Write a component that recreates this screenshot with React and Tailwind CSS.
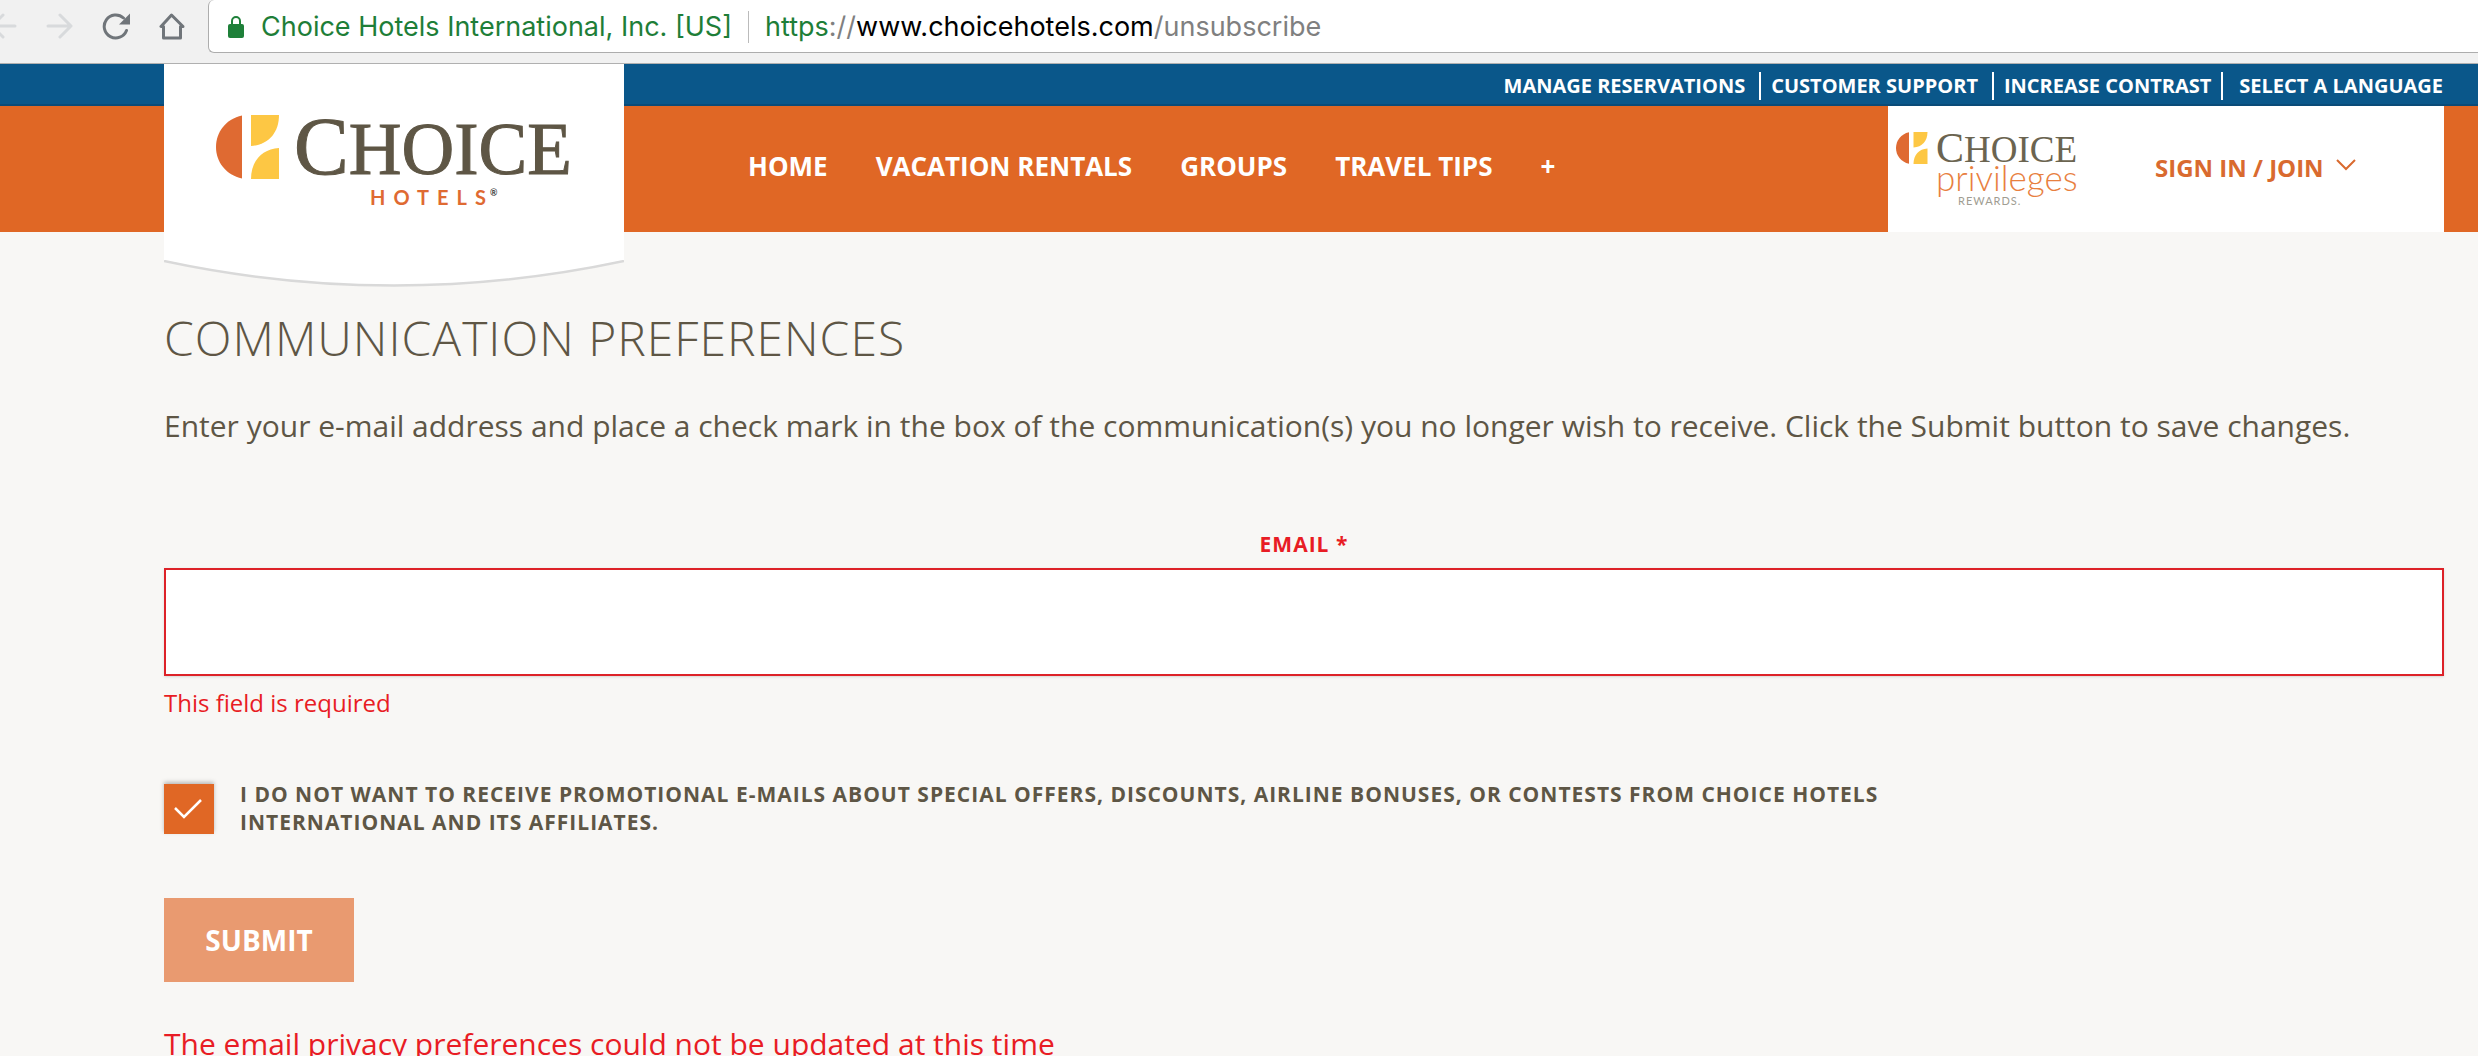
import React from "react";

function ChoiceMark({ className }) {
  return (
    <svg viewBox="0 0 64 64" className={className} aria-hidden="true">
      <path d="M26 0.500C10 4 0 17 0 32s10 28 26 31.500z" fill="#df6a32" />
      <path d="M35 0h28c0 18-11 30-28 31z" fill="#fdc744" />
      <path d="M63 33v31H35C35 46 46 34 63 33z" fill="#fdc744" />
    </svg>
  );
}

function ChoiceWord({ className, big, small }) {
  return (
    <span className={className}>
      <span className={big}>C</span>
      <span className={small}>HOICE</span>
    </span>
  );
}

function BrowserBar() {
  return (
    <div className="flex h-16 items-start border-b border-[#b0b0b0] bg-[#f1f1f1] font-['Inter',sans-serif]">
      <div className="flex h-[53px] w-[208px] shrink-0 items-center gap-7 text-[#70757a]">
        <button aria-label="Back" className="-ml-[10px] text-[#d8dadc]">
          <svg viewBox="0 0 28 28" className="size-7" fill="none" stroke="currentColor" strokeWidth="3" strokeLinecap="round" strokeLinejoin="round"><path d="M25 13H2M13 2L2 13l11 11" /></svg>
        </button>
        <button aria-label="Forward" className="text-[#d8dadc]">
          <svg viewBox="0 0 28 28" className="size-7" fill="none" stroke="currentColor" strokeWidth="3" strokeLinecap="round" strokeLinejoin="round"><path d="M2 13h23M14 2l11 11-11 11" /></svg>
        </button>
        <button aria-label="Reload">
          <svg viewBox="0 0 28 28" className="size-7" fill="none" stroke="currentColor" strokeWidth="3" strokeLinecap="round"><path d="M24.500 17.500A11.500 11.500 0 1 1 21.500 5" /><path d="M28 0.500v11H17z" fill="currentColor" stroke="none" /></svg>
        </button>
        <button aria-label="Home">
          <svg viewBox="0 0 28 28" className="size-7" fill="none" stroke="currentColor" strokeWidth="3" strokeLinejoin="round"><path d="M13.500 2L3 13.500h2.500V25h17V13.500H25z" /></svg>
        </button>
      </div>
      <div className="flex h-[53px] grow items-center rounded-l-md border-b border-l border-[#adadad] bg-white pl-[18px] pt-[2px] text-[27px] text-[#1e7e38]">
        <svg viewBox="0 0 18 24" className="mr-4 h-6 w-[18px]" aria-hidden="true"><rect x="1" y="9" width="16" height="14" rx="2" fill="#1e8039" /><path d="M5 10V6a4 4 0 0 1 8 0v4" fill="none" stroke="#1e8039" strokeWidth="2" /></svg>
        <span>Choice Hotels International, Inc. [US]</span>
        <span className="mx-4 h-8 w-px bg-[#bbb]" />
        <span>https<span className="text-[#808080]">://</span><span className="text-black">www.choicehotels.com</span><span className="text-[#808080]">/unsubscribe</span></span>
      </div>
    </div>
  );
}

function LogoCard() {
  return (
    <a href="#home" aria-label="Choice Hotels" className="absolute left-[164px] top-0 flex w-[460px] flex-col">
      <span className="flex h-[196px] items-start bg-white pl-[52px] pt-[51px]">
        <ChoiceMark className="size-16" />
        <span className="ml-[14px] flex flex-col">
          <ChoiceWord className="font-['Liberation_Serif',serif] leading-[64px] text-[#5e5645] [-webkit-text-stroke:1px_#5e5645]" big="text-[82px]" small="text-[73px]" />
          <span className="-mt-[22px] flex pl-[76px] font-['Lato',sans-serif] text-[20px] font-bold leading-[36px] tracking-[8px] text-[#df6a32]">HOTELS<span className="-ml-1 text-[9px] leading-[28px] tracking-normal text-[#444]">®</span></span>
        </span>
      </span>
      <svg viewBox="0 0 460 28" className="block w-full" aria-hidden="true"><path d="M0 0Q230 50 460 0z" fill="#fff" /><path d="M0 1Q230 50 460 1" fill="none" stroke="#d9d9d9" strokeWidth="2.500" /></svg>
    </a>
  );
}

const utility = [
  { text: "MANAGE RESERVATIONS", pad: "pr-[14px]" },
  { text: "CUSTOMER SUPPORT", pad: "border-l-2 border-white pl-[10px] pr-[14px]" },
  { text: "INCREASE CONTRAST", pad: "border-l-2 border-white pl-[10px] pr-[10px]" },
  { text: "SELECT A LANGUAGE", pad: "border-l-2 border-white pl-4" },
];
const nav = ["HOME", "VACATION RENTALS", "GROUPS", "TRAVEL TIPS", "+"];

function Header() {
  return (
    <header className="relative">
      <div className="flex h-[42px] items-center justify-end border-b-2 border-[#0a4b78] bg-[#0a578a] pr-[35px] pt-1 text-[20px] font-bold leading-[28px] text-white">
        {utility.map((item) => (
          <a key={item.text} href="#utility" className={item.pad}>{item.text}</a>
        ))}
      </div>
      <div className="flex h-[126px] items-stretch justify-between bg-[#e06725] pl-[748px] pr-[34px]">
        <nav className="flex items-center gap-12 pb-[6px] text-[26px] font-bold text-white">
          {nav.map((t) => (
            <a key={t} href="#nav">{t}</a>
          ))}
        </nav>
        <div className="flex w-[556px] items-start bg-white pl-2 pt-[26px]">
          <a href="#privileges" aria-label="Choice Privileges Rewards" className="flex w-[184px] items-start">
            <ChoiceMark className="size-8" />
            <span className="ml-2 flex flex-col">
              <ChoiceWord className="font-['Liberation_Serif',serif] leading-[32px] text-[#6b6450]" big="text-[42px]" small="text-[37px]" />
              <span className="-mt-[14px] font-['Lato',sans-serif] text-[35px] font-light leading-[36px] text-[#e8803f]">privileges</span>
              <span className="pl-[22px] font-['Lato',sans-serif] text-[11px] leading-[12px] tracking-[1px] text-[#a09d92]">REWARDS.</span>
            </span>
          </a>
          <button className="ml-[75px] flex items-center gap-3 pt-[18px] text-[24px] font-bold leading-[36px] text-[#d96a2f]">
            SIGN IN / JOIN
            <svg viewBox="0 0 20 12" className="mb-[6px] h-3 w-5" fill="none" stroke="currentColor" strokeWidth="2" aria-hidden="true"><path d="M1 1l9 9 9-9" /></svg>
          </button>
        </div>
      </div>
      <LogoCard />
    </header>
  );
}

export default function App() {
  return (
    <div className="h-screen overflow-hidden bg-[#f8f7f5] font-['Open_Sans',sans-serif] text-[#5e5645]">
      <BrowserBar />
      <Header />
      <main className="pl-[164px] pr-[34px] pt-[72px]">
        <h1 className="text-[48px] font-light leading-[68px] tracking-[1px]">COMMUNICATION PREFERENCES</h1>
        <p className="mt-8 text-[30px] leading-[44px]">Enter your e-mail address and place a check mark in the box of the communication(s) you no longer wish to receive. Click the Submit button to save changes.</p>
        <form className="mt-[82px]">
          <label htmlFor="email" className="block text-center text-[21px] font-bold leading-[28px] tracking-[1px] text-[#e81c24]">EMAIL *</label>
          <input id="email" type="email" className="mt-[10px] block h-[108px] w-full border-2 border-[#dd2228] bg-white px-4 text-[30px] shadow-sm outline-none" />
          <p className="mt-[9px] text-[24px] leading-[36px] text-[#e81c24]">This field is required</p>
          <label className="mt-[59px] flex items-start gap-[26px]">
            <span className="relative mt-1 size-[50px] shrink-0">
              <input type="checkbox" defaultChecked className="block size-[50px] appearance-none bg-[#e06725] shadow-[0_-2px_4px_rgba(0,0,0,0.25)]" />
              <svg viewBox="0 0 50 50" className="absolute inset-0 size-[50px]" fill="none" stroke="#fff" strokeWidth="2.500" aria-hidden="true"><path d="M11 24l9 9 17-17" /></svg>
            </span>
            <span className="max-w-[1700px] text-[21px] font-bold leading-[28px] tracking-[1px]">I DO NOT WANT TO RECEIVE PROMOTIONAL E-MAILS ABOUT SPECIAL OFFERS, DISCOUNTS, AIRLINE BONUSES, OR CONTESTS FROM CHOICE HOTELS INTERNATIONAL AND ITS AFFILIATES.</span>
          </label>
          <button type="submit" className="mt-[62px] block h-[84px] w-[190px] bg-[#e99a70] text-[28px] font-bold text-white">SUBMIT</button>
          <p className="mt-10 text-[30px] leading-[44px] text-[#e81c24]">The email privacy preferences could not be updated at this time</p>
        </form>
      </main>
    </div>
  );
}
